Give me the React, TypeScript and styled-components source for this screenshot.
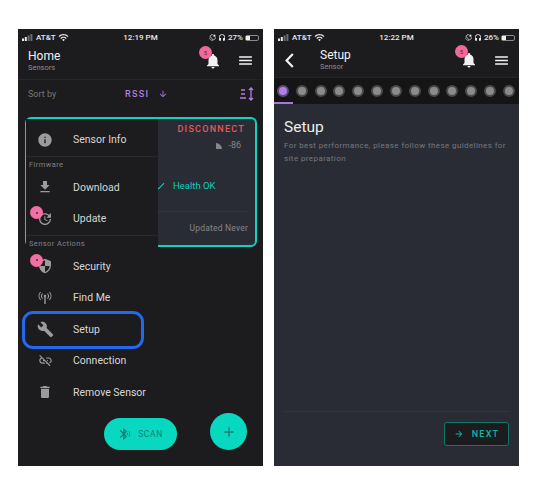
import React from "react";
import styled, { createGlobalStyle } from "styled-components";
import {
  MdInfo,
  MdFileDownload,
  MdUpdate,
  MdSecurity,
  MdBuild,
  MdLinkOff,
  MdDelete,
  MdNotifications,
  MdMenu,
  MdArrowDownward,
  MdArrowForward,
  MdAdd,
  MdBluetoothSearching,
  MdWifi,
  MdCheck,
  MdHeadset,
  MdScreenLockRotation,
} from "react-icons/md";

const GlobalStyle = createGlobalStyle`
  html, body {
    margin: 0;
    padding: 0;
    background: #ffffff;
    font-family: Roboto, "Liberation Sans", sans-serif;
  }
`;

const Page = styled.div`
  display: flex;
  gap: 11px;
  width: 537px;
  height: 497px;
  box-sizing: border-box;
  padding: 29px 0 0 18px;
  overflow: hidden;
`;

const Phone = styled.div<{ $bg: string }>`
  position: relative;
  flex: none;
  display: flex;
  flex-direction: column;
  width: 245px;
  height: 437px;
  background: ${(p) => p.$bg};
  overflow: hidden;
`;

const StatusBar = styled.div`
  flex: none;
  display: grid;
  grid-template-columns: 1fr auto 1fr;
  align-items: center;
  height: 19px;
  padding: 0 4px 2px;
  box-sizing: border-box;
  background: #1c1c1e;
  color: #e8e8e8;
  font-size: 8px;
  font-weight: 500;
`;

const StatusSide = styled.div<{ $end?: boolean }>`
  display: flex;
  align-items: center;
  gap: 2px;
  justify-content: ${(p) => (p.$end ? "flex-end" : "flex-start")};
`;

const Battery = styled.span`
  position: relative;
  display: block;
  width: 14px;
  height: 6px;
  box-sizing: border-box;
  border: 1px solid #8a8a8a;
  border-radius: 2px;
  &::before {
    content: "";
    display: block;
    width: 4px;
    height: 100%;
    background: #f0f0f0;
  }
`;

const Header = styled.div<{ $back?: boolean }>`
  flex: none;
  display: flex;
  align-items: center;
  height: ${(p) => (p.$back ? "30px" : "32px")};
  box-sizing: border-box;
  padding: 0 9px ${(p) => (p.$back ? "5px" : "6px")} ${(p) => (p.$back ? "11px" : "10px")};
  background: #1c1c1e;
  border-bottom: 1px solid #262628;
  color: #f2f2f2;
`;

const BackIcon = styled.svg`
  flex: none;
`;

const TitleBlock = styled.div<{ $back?: boolean }>`
  flex: 1;
  margin-left: ${(p) => (p.$back ? "26px" : "0")};
`;

const Title = styled.div`
  font-size: 12px;
  line-height: 13px;
`;

const SubTitle = styled.div`
  font-size: 7.5px;
  line-height: 9px;
  color: #8c8c8c;
`;

const BellWrap = styled.div`
  position: relative;
  display: flex;
  margin-right: 15px;
`;

const Badge = styled.span`
  position: absolute;
  left: -5px;
  top: -6px;
  width: 13px;
  height: 13px;
  border-radius: 50%;
  background: #f2689b;
  color: #5b2338;
  font-size: 6px;
  line-height: 13px;
  text-align: center;
`;

const SortRow = styled.div`
  flex: none;
  display: grid;
  grid-template-columns: 97px auto 1fr;
  align-items: center;
  height: 30px;
  box-sizing: border-box;
  padding: 0 8px 2px 10px;
  color: #b07fe0;
`;

const SortLabel = styled.span`
  font-size: 9px;
  color: #77777a;
`;

const SortValue = styled.span`
  display: flex;
  align-items: center;
  gap: 9px;
  font-size: 9px;
  font-weight: 500;
  letter-spacing: 1.3px;
`;

const SortIcon = styled.svg`
  justify-self: end;
`;

const SensorCard = styled.div`
  display: flex;
  flex-direction: column;
  align-items: flex-end;
  height: 130px;
  margin: 7px 6px 0 7px;
  padding: 5px 10px 0 0;
  box-sizing: border-box;
  background: #292c35;
  border: 2px solid #0fd4bd;
  border-radius: 6px;
`;

const Disconnect = styled.div`
  font-size: 9px;
  font-weight: 500;
  letter-spacing: 1.25px;
  line-height: 11px;
  color: #e25b5b;
`;

const Rssi = styled.div`
  display: flex;
  align-items: center;
  gap: 6px;
  margin: 5px 4px 0 0;
  font-size: 9px;
  line-height: 11px;
  color: #85868a;
`;

const Health = styled.div`
  align-self: flex-start;
  display: flex;
  align-items: center;
  gap: 7px;
  margin: 29px 0 0 127px;
  font-size: 9.5px;
  line-height: 12px;
  color: #10cbb5;
`;

const CardLine = styled.div`
  width: 90px;
  margin: 19px -2px 0 0;
  border-top: 1px solid #33363f;
`;

const Updated = styled.div`
  margin: 11px -3px 0 0;
  font-size: 8.5px;
  line-height: 11px;
  letter-spacing: 0.2px;
  color: #85868a;
`;

/* dropdown sits over the card */
const Menu = styled.div`
  position: absolute;
  left: 8px;
  top: 90px;
  width: 132px;
  height: 294px;
  box-sizing: border-box;
  padding-top: 5px;
  background: #1c1c1e;
  border-radius: 0 0 4px 4px;
`;

const MenuSection = styled.div<{ $line?: boolean }>`
  border-bottom: ${(p) => (p.$line ? "1px solid #2a2a2c" : "none")};
`;

const MenuLabel = styled.div`
  height: 15px;
  padding-left: 3px;
  font-size: 7.5px;
  line-height: 15px;
  letter-spacing: 0.4px;
  color: #808083;
`;

const MenuRow = styled.div`
  position: relative;
  display: grid;
  grid-template-columns: 47px 1fr;
  align-items: center;
  height: 31.5px;
  color: #d6d6d6;
  font-size: 10.5px;
  white-space: nowrap;
`;

const IconCell = styled.span`
  display: flex;
  justify-content: center;
  width: 24px;
  margin-left: 7px;
  color: #9b9b9b;
`;

const Dot = styled.span`
  position: absolute;
  left: 4px;
  top: 3px;
  width: 13px;
  height: 13px;
  border-radius: 50%;
  background: #f46fa4;
  &::after {
    content: "";
    position: absolute;
    left: 5.5px;
    top: 5.5px;
    width: 2px;
    height: 2px;
    border-radius: 50%;
    background: #5b2338;
  }
`;

const Highlight = styled.div`
  position: absolute;
  left: 4px;
  top: 282px;
  width: 122px;
  height: 38px;
  box-sizing: border-box;
  border: 3px solid #2468ee;
  border-radius: 11px;
`;

const ScanButton = styled.div`
  position: absolute;
  left: 86px;
  top: 389px;
  display: flex;
  align-items: center;
  justify-content: center;
  gap: 6px;
  width: 73px;
  height: 32px;
  border-radius: 16px;
  background: #08d8c0;
  color: #157a70;
  font-size: 8.5px;
  letter-spacing: 0.6px;
`;

const AddButton = styled.div`
  position: absolute;
  left: 192px;
  top: 384px;
  display: flex;
  align-items: center;
  justify-content: center;
  width: 37px;
  height: 37px;
  border-radius: 50%;
  background: #08d8c0;
  color: #157a70;
`;

const Stepper = styled.div`
  flex: none;
  position: relative;
  display: flex;
  justify-content: space-between;
  align-items: center;
  height: 26px;
  padding: 0 4px 0 3px;
  box-sizing: border-box;
  background: #151516;
`;

const Step = styled.span<{ $active?: boolean }>`
  box-sizing: border-box;
  width: 12px;
  height: 12px;
  border-radius: 50%;
  border: 2.5px solid ${(p) => (p.$active ? "#5e4a78" : "#4a4a4a")};
  background: ${(p) => (p.$active ? "#b07fe0" : "#8b8b8b")};
`;

const StepMark = styled.span`
  position: absolute;
  left: 0;
  bottom: 0;
  width: 19px;
  height: 2px;
  background: #a676d8;
`;

const Body = styled.div`
  flex: 1;
  display: flex;
  flex-direction: column;
  padding: 13px 10px 0;
`;

const BodyTitle = styled.div`
  font-size: 15.5px;
  line-height: 20px;
  color: #ececec;
`;

const BodyText = styled.div`
  margin-top: 2px;
  font-size: 8px;
  line-height: 13px;
  letter-spacing: 0.4px;
  color: #77797f;
  white-space: nowrap;
`;

const Footer = styled.div`
  margin-top: auto;
  display: flex;
  justify-content: flex-end;
  height: 55px;
  padding-top: 10px;
  box-sizing: border-box;
  border-top: 1px solid #32353e;
`;

const NextButton = styled.div`
  display: flex;
  align-items: center;
  justify-content: center;
  gap: 8px;
  width: 65px;
  height: 24px;
  box-sizing: border-box;
  background: #1c1c1e;
  border: 1.5px solid #10776d;
  border-radius: 3px;
  color: #0cb7a4;
  font-size: 9px;
  font-weight: 500;
  letter-spacing: 1.2px;
`;

const SignalBars = () => (
  <svg width="12" height="7" viewBox="0 0 12 7">
    <rect x="0" y="4.5" width="2" height="2.5" fill="#ececec" />
    <rect x="2.8" y="3" width="2" height="4" fill="#ececec" />
    <rect x="5.6" y="1.5" width="2" height="5.5" fill="#6a6a6a" />
    <rect x="8.4" y="0" width="2" height="7" fill="#6a6a6a" />
  </svg>
);

const Status = ({ time, battery }: { time: string; battery: string }) => (
  <StatusBar>
    <StatusSide>
      <SignalBars />
      <span>AT&amp;T</span>
      <MdWifi size={11} />
    </StatusSide>
    <span>{time}</span>
    <StatusSide $end>
      <MdScreenLockRotation size={7} />
      <MdHeadset size={8} />
      <span>{battery}</span>
      <Battery />
    </StatusSide>
  </StatusBar>
);

const Bell = () => (
  <BellWrap>
    <MdNotifications size={18} />
    <Badge>5</Badge>
  </BellWrap>
);

const FindMeIcon = () => (
  <svg width="16" height="16" viewBox="0 0 16 16" fill="none" stroke="currentColor" strokeWidth="1.1">
    <circle cx="8" cy="6" r="1.3" fill="currentColor" stroke="none" />
    <path d="M8 7v7" strokeWidth="1.4" />
    <path d="M5.6 3.6a3.6 3.6 0 0 0 0 5M10.4 3.6a3.6 3.6 0 0 1 0 5M3.6 2a6 6 0 0 0 0 8M12.4 2a6 6 0 0 1 0 8" />
  </svg>
);

const RssiIcon = () => (
  <svg width="6" height="6" viewBox="0 0 6 6">
    <path d="M0 6V0c3 0 6 3 6 6z" fill="currentColor" />
  </svg>
);

const stepKeys = Array.from({ length: 13 }, (_, i) => i);

const App = () => {
  return (
    <Page>
      <GlobalStyle />
      <Phone $bg="#1c1c1e">
        <Status time="12:19 PM" battery="27%" />
        <Header>
          <TitleBlock>
            <Title>Home</Title>
            <SubTitle>Sensors</SubTitle>
          </TitleBlock>
          <Bell />
          <MdMenu size={17} />
        </Header>
        <SortRow>
          <SortLabel>Sort by</SortLabel>
          <SortValue>
            RSSI <MdArrowDownward size={10} />
          </SortValue>
          <SortIcon width="15" height="14" viewBox="0 0 15 14" fill="none" stroke="currentColor" strokeWidth="1.3">
            <path d="M1 3h4M1 7h4M0 11h6M11 1v12M9 3l2-2 2 2M9 11l2 2 2-2" />
          </SortIcon>
        </SortRow>
        <SensorCard>
          <Disconnect>DISCONNECT</Disconnect>
          <Rssi>
            <RssiIcon /> -86
          </Rssi>
          <Health>
            <MdCheck size={12} /> Health OK
          </Health>
          <CardLine />
          <Updated>Updated Never</Updated>
        </SensorCard>
        <Menu>
          <MenuSection $line>
            <MenuRow>
              <IconCell>
                <MdInfo size={16} />
              </IconCell>
              Sensor Info
            </MenuRow>
          </MenuSection>
          <MenuSection $line>
            <MenuLabel>Firmware</MenuLabel>
            <MenuRow>
              <IconCell>
                <MdFileDownload size={16} />
              </IconCell>
              Download
            </MenuRow>
            <MenuRow>
              <IconCell>
                <MdUpdate size={16} />
              </IconCell>
              Update
              <Dot />
            </MenuRow>
          </MenuSection>
          <MenuSection>
            <MenuLabel>Sensor Actions</MenuLabel>
            <MenuRow>
              <IconCell>
                <MdSecurity size={16} />
              </IconCell>
              Security
              <Dot />
            </MenuRow>
            <MenuRow>
              <IconCell>
                <FindMeIcon />
              </IconCell>
              Find Me
            </MenuRow>
            <MenuRow>
              <IconCell>
                <MdBuild size={17} />
              </IconCell>
              Setup
            </MenuRow>
            <MenuRow>
              <IconCell>
                <MdLinkOff size={15} />
              </IconCell>
              Connection
            </MenuRow>
            <MenuRow>
              <IconCell>
                <MdDelete size={16} />
              </IconCell>
              Remove Sensor
            </MenuRow>
          </MenuSection>
        </Menu>
        <Highlight />
        <ScanButton>
          <MdBluetoothSearching size={14} />
          SCAN
        </ScanButton>
        <AddButton>
          <MdAdd size={16} />
        </AddButton>
      </Phone>
      <Phone $bg="#292c35">
        <Status time="12:22 PM" battery="26%" />
        <Header $back>
          <BackIcon width="9" height="15" viewBox="0 0 9 15" fill="none" stroke="currentColor" strokeWidth="2.2">
            <path d="M7.8 1 1.6 7.5l6.2 6.5" />
          </BackIcon>
          <TitleBlock $back>
            <Title>Setup</Title>
            <SubTitle>Sensor</SubTitle>
          </TitleBlock>
          <Bell />
          <MdMenu size={17} />
        </Header>
        <Stepper>
          {stepKeys.map((k) => (
            <Step key={k} $active={k === 0} />
          ))}
          <StepMark />
        </Stepper>
        <Body>
          <BodyTitle>Setup</BodyTitle>
          <BodyText>
            For best performance, please follow these guidelines for
            <br />
            site preparation
          </BodyText>
          <Footer>
            <NextButton>
              <MdArrowForward size={10} />
              NEXT
            </NextButton>
          </Footer>
        </Body>
      </Phone>
    </Page>
  );
};

export default App;
